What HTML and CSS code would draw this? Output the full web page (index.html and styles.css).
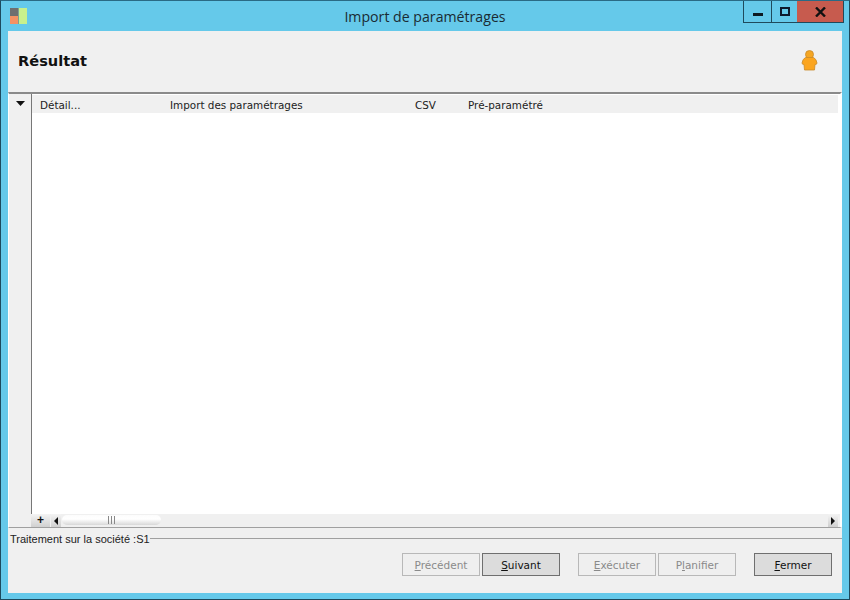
FILE: index.html
```html
<!DOCTYPE html>
<html lang="fr">
<head>
<meta charset="utf-8">
<title>Import de paramétrages</title>
<link rel="stylesheet" href="styles.css">
</head>
<body>
<div class="window">
  <div class="titlebar">
    <svg class="app-icon" width="17" height="17" viewBox="0 0 17 17">
      <rect x="0" y="0" width="8" height="8" fill="#6f6f6f"/>
      <rect x="0" y="8" width="8" height="8" fill="#f59263"/>
      <rect x="8" y="0" width="1" height="16" fill="#7f9f8f"/>
      <rect x="9" y="0" width="8" height="16" fill="#c8f08c"/>
    </svg>
    <div class="title">Import de paramétrages</div>
    <div class="controls">
      <div class="ctl ctl-min"><span class="min-glyph"></span></div>
      <div class="ctl ctl-max"><span class="max-glyph"></span></div>
      <div class="ctl ctl-close"><svg width="11" height="10" viewBox="0 0 11 10"><path d="M1 0.5 L10 9.5 M10 0.5 L1 9.5" stroke="#111" stroke-width="2.4" fill="none"/></svg></div>
    </div>
  </div>
  <div class="client">
    <div class="head">
      <div class="head-title">Résultat</div>
      <svg class="user" width="17" height="21" viewBox="0 0 17 21">
        <circle cx="8.5" cy="4.5" r="4" fill="#f5a623" stroke="#c98a2a" stroke-width="0.8"/>
        <path d="M4.5 7.5 H12.5 Q15.5 9 16 13 Q16 14.5 14 14.5 L13.5 20 H3.5 L3 14.5 Q1 14.5 1 13 Q1.5 9 4.5 7.5 Z" fill="#fba51f" stroke="#c98a2a" stroke-width="0.8"/>
      </svg>
    </div>
    <div class="grid">
      <div class="gutter">
        <svg class="sort" width="9" height="5" viewBox="0 0 9 5"><path d="M0 0 H9 L4.5 5 Z" fill="#111"/></svg>
        <div class="plus">+</div>
      </div>
      <div class="main">
        <div class="cols">
          <span class="c1">Détail...</span>
          <span class="c2">Import des paramétrages</span>
          <span class="c3">CSV</span>
          <span class="c4">Pré-paramétré</span>
        </div>
        <div class="rows"></div>
        <div class="hscroll">
          <div class="arrow"><svg width="4" height="8" viewBox="0 0 4 8"><path d="M4 0 V8 L0 4 Z" fill="#111"/></svg></div>
          <div class="track">
            <div class="thumb"><span class="grip"></span></div>
          </div>
          <div class="arrow arrow-r"><svg width="4" height="8" viewBox="0 0 4 8"><path d="M0 0 V8 L4 4 Z" fill="#111"/></svg></div>
        </div>
      </div>
    </div>
    <div class="group"><span class="group-label">Traitement sur la société :S1</span><span class="group-line"></span></div>
    <div class="buttons">
      <button class="btn" disabled><u>P</u>récédent</button>
      <button class="btn btn-on"><u>S</u>uivant</button>
      <button class="btn gap" disabled><u>E</u>xécuter</button>
      <button class="btn" disabled>P<u>l</u>anifier</button>
      <button class="btn btn-on gap2"><u>F</u>ermer</button>
    </div>
  </div>
</div>
</body>
</html>
```

FILE: styles.css
```css
html, body { margin: 0; padding: 0; }
body { width: 850px; height: 600px; overflow: hidden; font-family: "Liberation Sans", Arial, sans-serif; font-size: 12px; color: #111; }
.window { width: 850px; height: 600px; box-sizing: border-box; background: #65c9ea; border: 1px solid #1d4a5e; border-top-color: #2a6a85; display: flex; flex-direction: column; padding: 0 7px 6px; }
.titlebar { height: 30px; flex: none; display: flex; position: relative; align-items: flex-start; }
.app-icon { margin: 7px 0 0 2px; }
.title { position: absolute; left: 0; right: 0; top: 6px; text-align: center; font-family: "Open Sans", sans-serif; font-size: 14.15px; line-height: 19px; color: #1a2b33; }
.controls { margin-left: auto; margin-right: -2px; display: flex; height: 21px; border: 1px solid #1f4a5c; border-top: 0; position: relative; }
.ctl { display: flex; align-items: center; justify-content: center; height: 21px; }
.ctl-min { width: 27px; border-right: 1px solid #1f4a5c; }
.ctl-max { width: 25px; }
.ctl-close { width: 46px; background: #c75b4e; }
.min-glyph { width: 10px; height: 3px; background: #0d1a22; margin-top: 5px; }
.max-glyph { width: 6px; height: 5px; border: 2px solid #0d1a2e; }
.client { flex: 1; background: #f0f0f0; display: flex; flex-direction: column; min-height: 0; }
.head { height: 61px; flex: none; display: flex; align-items: center; justify-content: space-between; padding: 0 24px 0 10px; }
.head-title { font-family: "DejaVu Sans", sans-serif; font-weight: bold; font-size: 14.6px; margin-bottom: 2px; color: #111; }
.user { margin-bottom: 2px; }
.grid { height: 436px; flex: none; display: flex; border-top: 2px solid #8a8a8a; border-bottom: 1px solid #a0a0a0; border-left: 1px solid #fff; border-right: 2px solid #fff; box-sizing: border-box; }
.gutter { width: 22px; flex: none; border-right: 1px solid #777; display: flex; flex-direction: column; align-items: center; position: relative; background: #f0f0f0; box-sizing: content-box; }
.sort { margin-top: 7px; }
.plus { position: absolute; right: -19px; bottom: 0; width: 19px; height: 13px; line-height: 13px; text-align: center; font-size: 12px; font-weight: bold; color: #111; background: linear-gradient(#f4f4f4, #d0d0d0); }
.main { flex: 1; display: flex; flex-direction: column; min-width: 0; background: #fff; padding-top: 1px; }
.cols { height: 18px; flex: none; background: #f0f0f0; position: relative; margin-right: 2px; font-family: "DejaVu Sans", "Liberation Sans", sans-serif; font-size: 10.4px; line-height: 20px; color: #222; }
.cols span { position: absolute; top: 0; white-space: nowrap; }
.c1 { left: 8px; }
.c2 { left: 138px; }
.c3 { left: 383px; }
.c4 { left: 436px; }
.rows { flex: 1; }
.hscroll { height: 13px; flex: none; display: flex; align-items: stretch; background: #f0f0f0; padding-left: 19px; margin-right: 0; }
.arrow { width: 10px; display: flex; align-items: center; justify-content: center; background: linear-gradient(#f4f4f4, #d0d0d0); }
.arrow-r { margin-right: 2px; }
.track { flex: 1; padding: 1px 0 0 1px; }
.thumb { width: 99px; height: 10px; border-radius: 5px; background: linear-gradient(#fcfcfc, #fff 40%, #d8d8d8); display: flex; justify-content: center; align-items: center; }
.grip { width: 7px; height: 8px; background: repeating-linear-gradient(90deg, #888 0 1px, transparent 1px 3px); }
.group { height: 21px; flex: none; display: flex; align-items: center; padding-left: 2px; }
.group-label { font-size: 11px; font-family: "Liberation Sans", sans-serif; color: #222; white-space: nowrap; }
.group-line { flex: 1; height: 1px; background: #a0a0a0; }
.buttons { display: flex; padding: 4px 10px 0 0; justify-content: flex-end; gap: 2px; }
.btn { width: 78px; height: 23px; padding: 0; box-sizing: border-box; border: 1px solid #b8b8b8; background: #efefef; font-family: "DejaVu Sans", "Liberation Sans", sans-serif; font-size: 10.5px; color: #8a8a8a; }
.btn-on { border-color: #6f6f6f; background: #dcdcdc; color: #111; }
.gap { margin-left: 16px; }
.gap2 { margin-left: 16px; }
```
